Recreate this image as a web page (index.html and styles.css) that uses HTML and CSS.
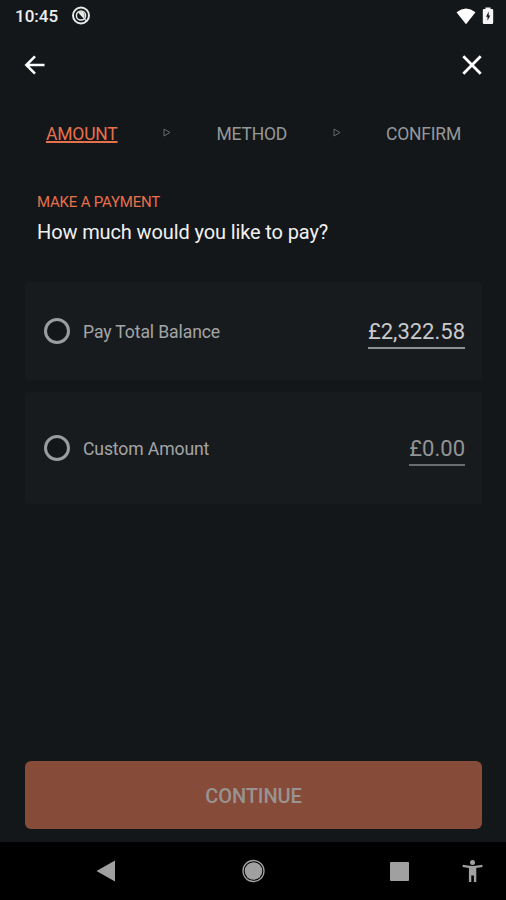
FILE: index.html
```html
<!DOCTYPE html>
<html lang="en">
<head>
<meta charset="utf-8">
<title>Make a payment</title>
<link rel="stylesheet" href="styles.css">
</head>
<body>
<div class="screen">
  <div class="status">
    <span class="clock">10:45</span>
    <svg class="notice" width="20" height="20" viewBox="0 0 20 20"><circle cx="10" cy="9.500" r="8" fill="none" stroke="#e8e8e8" stroke-width="2"/><circle cx="10" cy="9.500" r="4.600" fill="none" stroke="#e8e8e8" stroke-width="1.500"/><path d="M8 6.700q4-1.800 5 2.300l-.2 2.800zM13.500 13l2.400 2.400" fill="#e8e8e8" stroke="#e8e8e8" stroke-width="1.2"/></svg>
    <svg class="wifi" width="20" height="17" viewBox="0 0 20 17"><path d="M.5 4.200Q10-3.200 19.500 4.200L10 16.300z" fill="#fff"/></svg>
    <svg class="battery" width="12" height="18" viewBox="0 0 12 18"><path d="M3.500 2V.5h5V2H10q1.200 0 1.200 1.200v12.600Q11.200 17 10 17H2Q.8 17 .8 15.800V3.200Q.8 2 2 2z" fill="#f4f4f4"/><path d="M6.700 4.500L4 9.800h1.500v3.900l2.800-5.300H6.700z" fill="#14181b"/></svg>
  </div>
  <header class="bar">
    <svg width="22" height="20" viewBox="0 0 22 20" fill="none" stroke="#fff" stroke-width="2.500"><path d="M20.500 10H3M11 1.300L2.300 10l8.700 8.700"/></svg>
    <svg width="20" height="20" viewBox="0 0 20 20" fill="none" stroke="#fff" stroke-width="2.800"><path d="M1.300 1.300l17.400 17.400M18.700 1.300L1.300 18.700"/></svg>
  </header>
  <nav class="steps">
    <span class="step active">AMOUNT</span>
    <svg width="8" height="9" viewBox="0 0 8 9"><path d="M1 1l6 3.500L1 8z" fill="none" stroke="#66696b"/></svg>
    <span class="step">METHOD</span>
    <svg width="8" height="9" viewBox="0 0 8 9"><path d="M1 1l6 3.500L1 8z" fill="none" stroke="#66696b"/></svg>
    <span class="step">CONFIRM</span>
  </nav>
  <div class="heading">
    <div class="eyebrow">MAKE A PAYMENT</div>
    <h1>How much would you like to pay?</h1>
  </div>
  <main class="options">
    <div class="option"><span class="radio"></span><span class="label">Pay Total Balance</span><span class="value">£2,322.58</span></div>
    <div class="option custom"><span class="radio"></span><span class="label">Custom Amount</span><span class="value">£0.00</span></div>
  </main>
  <button class="continue">CONTINUE</button>
  <footer class="system">
    <svg width="506" height="58" viewBox="0 0 506 58" fill="#a0a0a0"><path d="M96.500 29L115 18.500v21z"/><circle cx="253.500" cy="29" r="8.800"/><circle cx="253.500" cy="29" r="10.500" fill="none" stroke="#a0a0a0" stroke-width="1.300"/><rect x="390" y="20" width="19" height="19" rx="1"/><circle cx="472.500" cy="20.500" r="2.500"/><path d="M462.800 22.800q9.700 2.200 19.400 0l.4 2.100-6.300 1.200V40h-2.400v-6.500h-2.600V40h-2.400V26.100l-6.400-1.200z"/></svg>
  </footer>
</div>
</body>
</html>
```
FILE: styles.css
```css
* { box-sizing: border-box; }
body { margin: 0; background: #131719; font-family: Roboto, sans-serif; }
.screen { width: 506px; height: 900px; display: flex; flex-direction: column; overflow: hidden; }
.status { height: 32px; display: flex; align-items: center; padding: 0 12px 0 15px; color: #eee; flex: none; }
.clock { width: 56px; font: 500 17px/32px Roboto, sans-serif; letter-spacing: 0; }
.wifi { margin-left: auto; margin-right: 6px; }
.bar { height: 64px; display: flex; justify-content: space-between; align-items: center; padding: 1px 24px 0; flex: none; }
.steps { height: 75px; display: flex; align-items: center; justify-content: space-between; padding: 0 45px 2px 46px; flex: none; }
.step { font-size: 17.500px; line-height: 20px; letter-spacing: -.2px; padding-top: 2px; color: #96989a; }
.active { color: #e6714d; text-decoration: underline; text-decoration-thickness: 2px; text-underline-offset: 1px; }
.heading { height: 111px; padding: 22px 37px 0; flex: none; }
.eyebrow { color: #e6714d; font-size: 15px; line-height: 18px; letter-spacing: -.2px; }
h1 { margin: 9px 0 0; color: #f1f1f1; font-size: 20px; line-height: 24px; letter-spacing: -.12px; font-weight: 400; }
.options { padding: 0 24px 0 25px; display: flex; flex-direction: column; gap: 12px; }
.option { height: 98px; display: flex; align-items: center; padding: 0 17px 0 19px; border-radius: 4px; background: #181b1e; }
.custom { height: 112px; }
.radio { width: 26px; height: 26px; border: 3px solid #9a9c9e; border-radius: 50%; background: #131719; margin-right: 13px; }
.label { color: #a3a5a6; font-size: 17.600px; line-height: 22px; letter-spacing: -.12px; padding-top: 1px; }
.value { margin-left: auto; margin-top: 4px; color: #c9cacb; font-size: 22px; line-height: 29px; border-bottom: 2px solid #8d9091; padding-bottom: 1px; }
.custom .value { color: #929495; border-color: #696c6e; }
.continue { margin: auto 24px 13px 25px; height: 68px; border: 0; padding: 1px 0 0; border-radius: 6px; background: #874b3a; color: #999391; font: 500 20px/24px Roboto, sans-serif; letter-spacing: -.1px; flex: none; }
.system { height: 58px; background: #000; flex: none; }
.system svg { display: block; }
```
